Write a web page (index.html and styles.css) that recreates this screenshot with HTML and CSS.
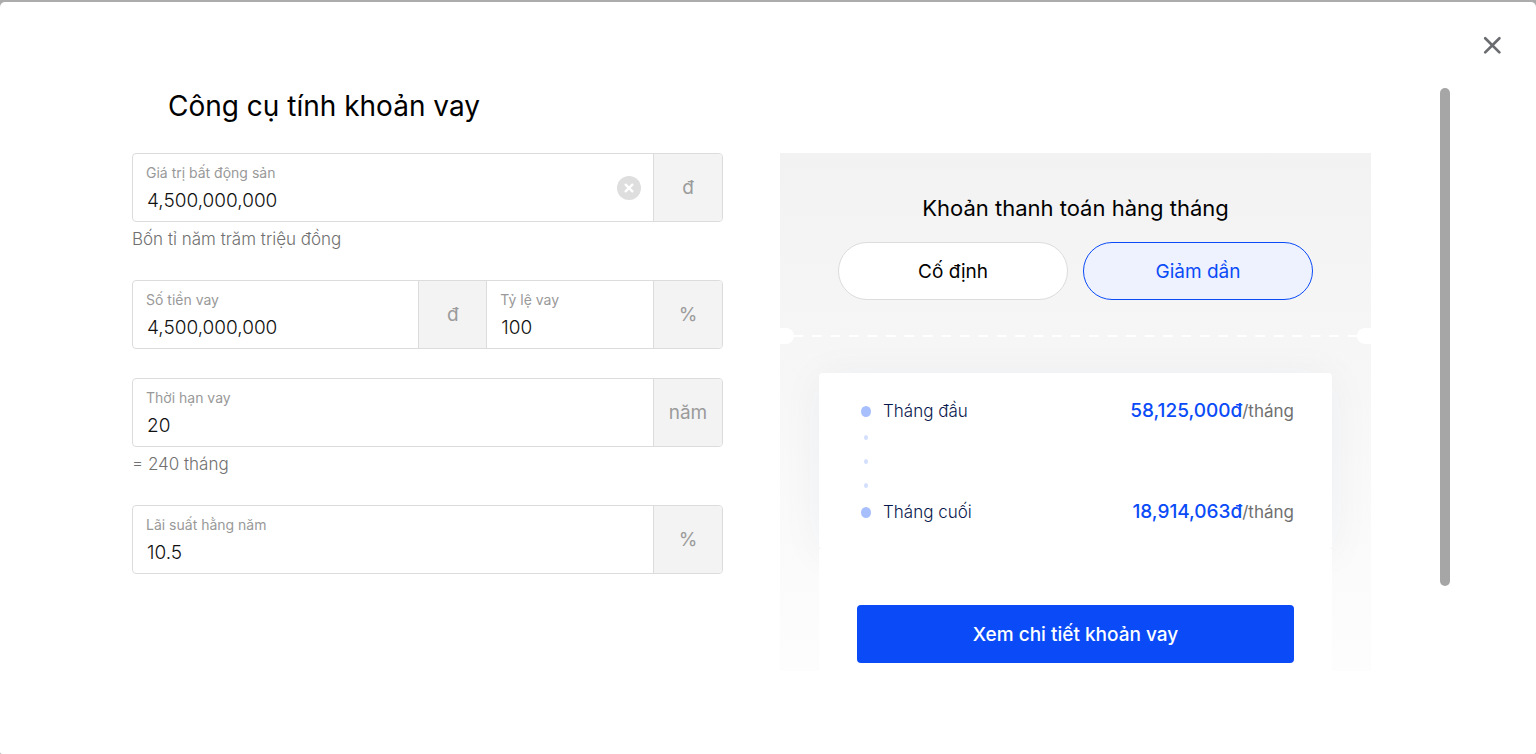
FILE: index.html
```html
<!DOCTYPE html>
<html lang="vi">
<head>
<meta charset="utf-8">
<meta name="viewport" content="width=device-width, initial-scale=1">
<title>Công cụ tính khoản vay</title>
<link rel="stylesheet" href="styles.css">
</head>
<body>
<main class="modal">
  <header class="modal-head">
    <button class="close" type="button" aria-label="Đóng">
      <svg width="20" height="20" viewBox="0 0 20 20"><path d="M3.2 3.2 17.4 17.4M17.4 3.2 3.2 17.4" fill="none" stroke="#6b6c70" stroke-width="2.7" stroke-linecap="round"/></svg>
    </button>
  </header>
  <div class="modal-body">
    <div class="content">
      <h1 class="title">Công cụ tính khoản vay</h1>
      <div class="columns">
        <form class="form">
          <div>
            <div class="group">
              <div class="field">
                <label for="price">Giá trị bất động sản</label>
                <input id="price" type="text" value="4,500,000,000">
              </div>
              <button class="clear" type="button" aria-label="Xóa">
                <svg width="24" height="24" viewBox="0 0 24 24"><circle cx="12" cy="12" r="12" fill="#dedede"/><path d="M8.6 8.6l6.8 6.8M15.4 8.6l-6.8 6.8" stroke="#fff" stroke-width="2.3" stroke-linecap="round"/></svg>
              </button>
              <span class="unit">đ</span>
            </div>
            <p class="help">Bốn tỉ năm trăm triệu đồng</p>
          </div>
          <div class="group">
            <div class="field field-loan">
              <label for="loan">Số tiền vay</label>
              <input id="loan" type="text" value="4,500,000,000">
            </div>
            <span class="unit unit-mid">đ</span>
            <div class="field field-ratio">
              <label for="ratio">Tỷ lệ vay</label>
              <input id="ratio" type="text" value="100">
            </div>
            <span class="unit">%</span>
          </div>
          <div>
            <div class="group">
              <div class="field">
                <label for="term">Thời hạn vay</label>
                <input id="term" type="text" value="20">
              </div>
              <span class="unit">năm</span>
            </div>
            <p class="help">= 240 tháng</p>
          </div>
          <div class="group">
            <div class="field">
              <label for="rate">Lãi suất hằng năm</label>
              <input id="rate" type="text" value="10.5">
            </div>
            <span class="unit">%</span>
          </div>
        </form>
        <section class="panel">
          <h2 class="panel-title">Khoản thanh toán hàng tháng</h2>
          <div class="pills">
            <button class="pill" type="button">Cố định</button>
            <button class="pill pill-active" type="button">Giảm dần</button>
          </div>
          <div class="tear"></div>
          <div class="result">
            <div class="card">
              <div class="row">
                <i class="dot"></i><span class="month">Tháng đầu</span>
                <span class="amount"><b>58,125,000đ</b>/tháng</span>
              </div>
              <div class="steps"><i></i><i></i><i></i></div>
              <div class="row">
                <i class="dot"></i><span class="month">Tháng cuối</span>
                <span class="amount"><b>18,914,063đ</b>/tháng</span>
              </div>
            </div>
            <div class="action">
              <button class="primary" type="button">Xem chi tiết khoản vay</button>
            </div>
          </div>
        </section>
      </div>
    </div>
    <div class="scroll"><div class="thumb"></div></div>
  </div>
</main>
</body>
</html>
```
FILE: styles.css
```css
* { box-sizing: border-box; }
body {
  margin: 0;
  padding-top: 2px;
  background: #acacac;
  color: #000;
  font-family: Inter, "Noto Sans", sans-serif;
}
h1, h2, p { margin: 0; font-weight: 400; }
button, input { font: inherit; color: inherit; }
button { padding: 0; cursor: pointer; }

.modal {
  min-height: calc(100vh - 2px);
  background: #fff;
  border-radius: 5px 5px 2px 2px;
}
.modal-head {
  display: flex;
  justify-content: flex-end;
  padding: 33px 34px 33px 0;
}
.close { display: flex; border: 0; background: none; }
.modal-body { display: flex; padding-right: 86px; }
.content { flex: 1; padding: 0 69px 0 132px; }
.title {
  padding-left: 36px;
  font-size: 28px;
  line-height: 36px;
  margin-bottom: 29px;
}
.columns {
  display: grid;
  grid-template-columns: 1fr 1fr;
  gap: 57px;
  align-items: start;
}

.form { display: flex; flex-direction: column; gap: 29px; }
.group {
  display: flex;
  align-items: stretch;
  border: 1px solid #dcdcdc;
  border-radius: 4px;
  overflow: hidden;
}
.field { flex: 1 1 0; min-width: 0; padding: 9px 13px 3px; }
.field-loan { flex-grow: 13; }
.field-ratio { flex-grow: 7; }
.field label {
  display: block;
  color: #999;
  font-size: 14px;
  line-height: 20px;
}
.field input {
  display: block;
  width: 100%;
  height: 35px;
  padding: 0 1px;
  border: 0;
  outline: 0;
  background: none;
  color: #111;
  font-size: 19px;
  font-weight: 300;
}
.clear {
  display: flex;
  align-self: center;
  margin-right: 12px;
  border: 0;
  background: none;
}
.unit {
  flex: 0 0 69px;
  display: flex;
  align-items: center;
  justify-content: center;
  border-left: 1px solid #dcdcdc;
  background: #f3f3f3;
  color: #9b9b9b;
  font-size: 19px;
}
.unit-mid { border-right: 1px solid #dcdcdc; }
.help {
  padding-top: 5px;
  color: #707070;
  font-size: 17px;
  font-weight: 300;
  line-height: 24px;
}

.panel {
  padding-top: 40px;
  overflow: hidden;
  background: linear-gradient(#f2f2f2, #fdfdfd);
}
.panel-title {
  font-size: 22px;
  line-height: 30px;
  text-align: center;
}
.pills {
  display: grid;
  grid-template-columns: 1fr 1fr;
  gap: 15px;
  padding: 19px 58px 28px;
}
.pill {
  height: 58px;
  border: 1px solid #dcdcdc;
  border-radius: 29px;
  background: #fff;
  font-size: 19px;
}
.pill-active {
  border-color: #0a4bf7;
  background: #eef2fe;
  color: #0a4bf7;
}
.tear {
  display: flex;
  justify-content: space-between;
  height: 16px;
  background: linear-gradient(90deg, #fff 27%, transparent 27% 73%, #fff 73%) 0 50% / calc(100% / 32) 2px repeat-x;
}
.tear::before,
.tear::after {
  content: "";
  width: 14px;
  background: #fff;
}
.tear::before { border-radius: 0 8px 8px 0; }
.tear::after { border-radius: 8px 0 0 8px; }
.result { padding: 29px 39px 0; }
.card {
  padding: 26px 38px 25px;
  border-radius: 4px;
  background: #fff;
  box-shadow: 0 4px 44px rgba(16, 50, 120, 0.05);
}
.row { display: flex; align-items: center; height: 24px; }
.dot {
  width: 10px;
  height: 11px;
  margin: 0 12px 0 4px;
  border-radius: 50%;
  background: #a8bffd;
}
.month { flex: 1; color: #07174d; font-size: 17px; font-weight: 300; }
.amount { color: #707070; font-size: 17px; line-height: 24px; }
.amount b { color: #0a4bf7; font-size: 19px; font-weight: 500; }
.steps {
  display: flex;
  flex-direction: column;
  justify-content: center;
  gap: 19px;
  height: 77px;
  padding-left: 7px;
}
.steps i {
  width: 4px;
  height: 5px;
  border-radius: 50%;
  background: #d4dffe;
}
.action {
  position: relative;
  padding: 56px 38px 8px;
  background: #fff;
}
.primary {
  width: 100%;
  height: 58px;
  border: 0;
  border-radius: 4px;
  background: #0a4bf7;
  color: #fff;
  font-size: 19px;
  font-weight: 500;
}
.scroll { width: 10px; }
.thumb { height: 498px; border-radius: 5px; background: #a6a6a6; }
```
